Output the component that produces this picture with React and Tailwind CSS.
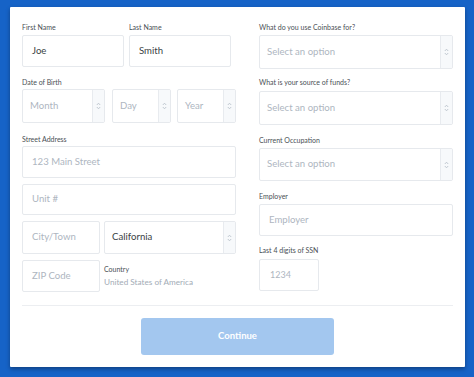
import React from "react";

const font = { fontFamily: "Lato, 'Open Sans', sans-serif" };

const Spinner = () => (
  <div className="flex w-[12px] shrink-0 items-center justify-center border-l border-[#e8ebef] bg-[#f7f9fb]">
    <svg width="5" height="8" viewBox="0 0 5 8" fill="none" stroke="#b4bcc6" strokeWidth="0.8">
      <path d="M0.8 3 L2.5 1.2 L4.2 3" />
      <path d="M0.8 5 L2.5 6.8 L4.2 5" />
    </svg>
  </div>
);

const Label = ({ children, className = "" }) => (
  <div className={`text-[7px] leading-[10px] text-[#4a4f55] ${className}`}>{children}</div>
);

const Box = ({ value, placeholder, select, className = "" }) => (
  <div className={`flex overflow-hidden rounded-[2px] border border-[#e6e9ed] bg-white ${className}`}>
    <div
      className={`flex flex-1 items-center text-[9.6px] ${select ? "pl-[7px]" : "pl-[9px]"} ${
        value ? "text-[#3a3f45]" : "text-[#aeb6bf]"
      }`}
    >
      {value || placeholder}
    </div>
    {select && <Spinner />}
  </div>
);

const App = () => {
  return (
    <div className="h-[377px] w-[474px] overflow-hidden bg-[#1663c7] pt-[7px]" style={font}>
      <div className="ml-[10px] h-[360px] w-[455px] rounded-[1px] bg-white px-[12px] pt-[15px] shadow-[0_2px_4px_rgba(0,0,0,0.35)]">
        <div className="grid grid-cols-[214px_194px] gap-x-[23px]">
          <div className="flex flex-col">
            <div className="flex gap-[5px]">
              <div className="w-[102px]">
                <Label className="mb-[3px]">First Name</Label>
                <Box value="Joe" className="h-[32px]" />
              </div>
              <div className="w-[102px]">
                <Label className="mb-[3px]">Last Name</Label>
                <Box value="Smith" className="h-[32px]" />
              </div>
            </div>
            <Label className="mt-[10px] mb-[2px]">Date of Birth</Label>
            <div className="flex">
              <Box placeholder="Month" select className="h-[34px] w-[83px]" />
              <Box placeholder="Day" select className="ml-[7px] h-[34px] w-[59px]" />
              <Box placeholder="Year" select className="ml-[6px] h-[34px] w-[59px]" />
            </div>
            <Label className="mt-[11px] mb-[2px]">Street Address</Label>
            <Box placeholder="123 Main Street" className="h-[32px]" />
            <Box placeholder="Unit #" className="mt-[6px] h-[31px]" />
            <div className="mt-[6px] flex gap-[4px]">
              <Box placeholder="City/Town" className="h-[33px] w-[78px]" />
              <Box value="California" select className="h-[33px] flex-1" />
            </div>
            <div className="mt-[6px] flex gap-[4px]">
              <Box placeholder="ZIP Code" className="h-[32px] w-[78px]" />
              <div className="pt-[4px]">
                <Label>Country</Label>
                <div className="mt-[2px] text-[8.2px] text-[#a3acb6]">United States of America</div>
              </div>
            </div>
          </div>
          <div className="flex flex-col">
            <Label className="mb-[3px]">What do you use Coinbase for?</Label>
            <Box placeholder="Select an option" select className="h-[34px]" />
            <Label className="mt-[8px] mb-[4px]">What is your source of funds?</Label>
            <Box placeholder="Select an option" select className="h-[34px]" />
            <Label className="mt-[10px] mb-[3px]">Current Occupation</Label>
            <Box placeholder="Select an option" select className="h-[33px]" />
            <Label className="mt-[10px] mb-[3px]">Employer</Label>
            <Box placeholder="Employer" className="h-[32px]" />
            <Label className="mt-[9px] mb-[4px]">Last 4 digits of SSN</Label>
            <div className="flex h-[32px] w-[60px] items-center rounded-[2px] border border-[#e6e9ed] pl-[10px] text-[9px] text-[#aeb6bf]">
              1234
            </div>
          </div>
        </div>
        <div className="mt-[13px] h-px bg-[#eceef1]" />
        <div className="mt-[12px] flex justify-center">
          <button
            type="button"
            className="h-[37px] w-[193px] rounded-[3px] bg-[#a3c7ef] text-[9.5px] font-bold text-white"
          >
            Continue
          </button>
        </div>
      </div>
    </div>
  );
};

export default App;
